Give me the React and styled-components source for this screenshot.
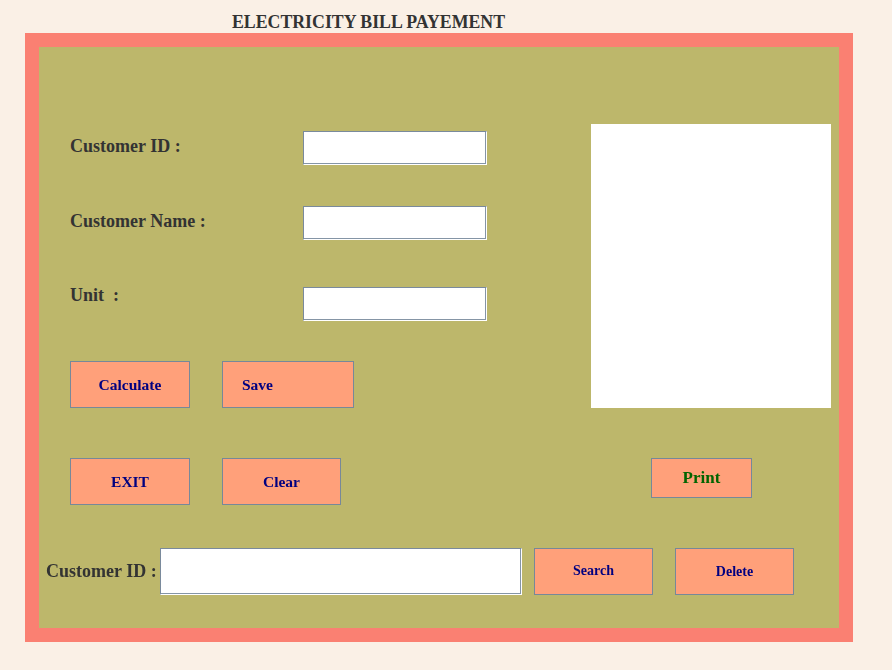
import styled, { createGlobalStyle } from 'styled-components'

const GlobalStyle = createGlobalStyle`
  body {
    margin: 0;
    background: #faf0e6;
    font-family: 'Liberation Serif', 'Times New Roman', serif;
  }
`

export default function App() {
  return (
    <>
      <GlobalStyle />
      <Page>
        <Title>ELECTRICITY BILL PAYEMENT</Title>
        <Frame>
          <Panel>
            <TopSection>
              <FormColumn>
                <FieldRow $top={84}>
                  <Label $offset={5}>Customer ID :</Label>
                  <Input autoFocus />
                </FieldRow>
                <FieldRow $top={41}>
                  <Label $offset={5}>Customer Name :</Label>
                  <Input />
                </FieldRow>
                <FieldRow $top={47}>
                  <Label $offset={-2}>Unit&nbsp;&nbsp;:</Label>
                  <Input />
                </FieldRow>
                <ButtonRow $top={40} $inset={0}>
                  <Button $w={120}>Calculate</Button>
                  <Button $w={132} $align="left">Save</Button>
                </ButtonRow>
              </FormColumn>
              <Preview />
            </TopSection>

            <ButtonRow $top={50} $inset={31}>
              <Button $w={120}>EXIT</Button>
              <Button $w={119}>Clear</Button>
              <PrintButton>Print</PrintButton>
            </ButtonRow>

            <SearchRow>
              <SearchLabel>Customer ID :</SearchLabel>
              <SearchInput />
              <Button $w={119} $size={14} $shift={-1} $gap={12}>Search</Button>
              <Button $w={119} $size={14} $gap={22}>Delete</Button>
            </SearchRow>
          </Panel>
        </Frame>
      </Page>
    </>
  )
}

const Page = styled.div`
  width: 892px;
  height: 670px;
  padding-top: 12px;
  box-sizing: border-box;
`

const Title = styled.h1`
  margin: 0 0 1px 232px;
  height: 20px;
  color: #333;
  font-size: 17.8px;
  font-weight: 700;
  line-height: 20px;
`

const Frame = styled.div`
  width: 828px;
  height: 609px;
  margin-left: 25px;
  padding: 14px;
  box-sizing: border-box;
  background: #fa8072;
`

const Panel = styled.div`
  width: 800px;
  height: 581px;
  display: flex;
  flex-direction: column;
  background: #bdb76b;
`

const TopSection = styled.div`
  display: flex;
  justify-content: space-between;
`

const FormColumn = styled.div`
  display: flex;
  flex-direction: column;
  padding-left: 31px;
`

const FieldRow = styled.div`
  display: flex;
  align-items: flex-start;
  margin-top: ${({ $top }) => $top}px;
`

const Label = styled.span`
  width: 233px;
  margin-top: ${({ $offset }) => $offset}px;
  color: #333;
  font-size: 18px;
  font-weight: 700;
  line-height: 20px;
  white-space: pre;
`

const Input = styled.input`
  width: 184px;
  height: 34px;
  padding: 0 2px;
  box-sizing: border-box;
  border: 1px solid;
  border-color: #7a8a9c #fff #fff #7a8a9c;
  box-shadow: inset -1px -1px 0 #8595a6;
  background: #fff;
  font-family: 'Liberation Serif', serif;
  font-size: 16px;
  caret-color: #000;
  outline: none;
`

const ButtonRow = styled.div`
  display: flex;
  align-items: flex-start;
  gap: 32px;
  padding-left: ${({ $inset }) => $inset}px;
  margin-top: ${({ $top }) => $top}px;
`

const Button = styled.button`
  flex: none;
  width: ${({ $w }) => $w}px;
  height: 47px;
  margin-top: ${({ $shift }) => $shift || 0}px;
  margin-left: ${({ $gap }) => $gap || 0}px;
  padding: ${({ $align }) => ($align === 'left' ? '0 0 0 19px' : '0')};
  box-sizing: border-box;
  display: flex;
  align-items: center;
  justify-content: ${({ $align }) => ($align === 'left' ? 'flex-start' : 'center')};
  border: 1px solid #778899;
  background: #ffa07a;
  color: #000080;
  font-family: 'Liberation Serif', serif;
  font-size: ${({ $size }) => $size || 15.5}px;
  font-weight: 700;
  cursor: pointer;
`

const PrintButton = styled(Button)`
  width: 101px;
  height: 40px;
  margin-left: 278px;
  color: #006400;
  font-size: 17px;
`

const Preview = styled.div`
  width: 240px;
  height: 284px;
  margin: 77px 8px 0 0;
  background: #fff;
`

const SearchRow = styled.div`
  display: flex;
  align-items: center;
  margin-top: 43px;
  padding-left: 7px;
  height: 47px;
`

const SearchLabel = styled.span`
  flex: none;
  width: 114px;
  color: #333;
  font-size: 18px;
  font-weight: 700;
  white-space: nowrap;
`

const SearchInput = styled(Input)`
  flex: none;
  width: 362px;
  height: 47px;
`
